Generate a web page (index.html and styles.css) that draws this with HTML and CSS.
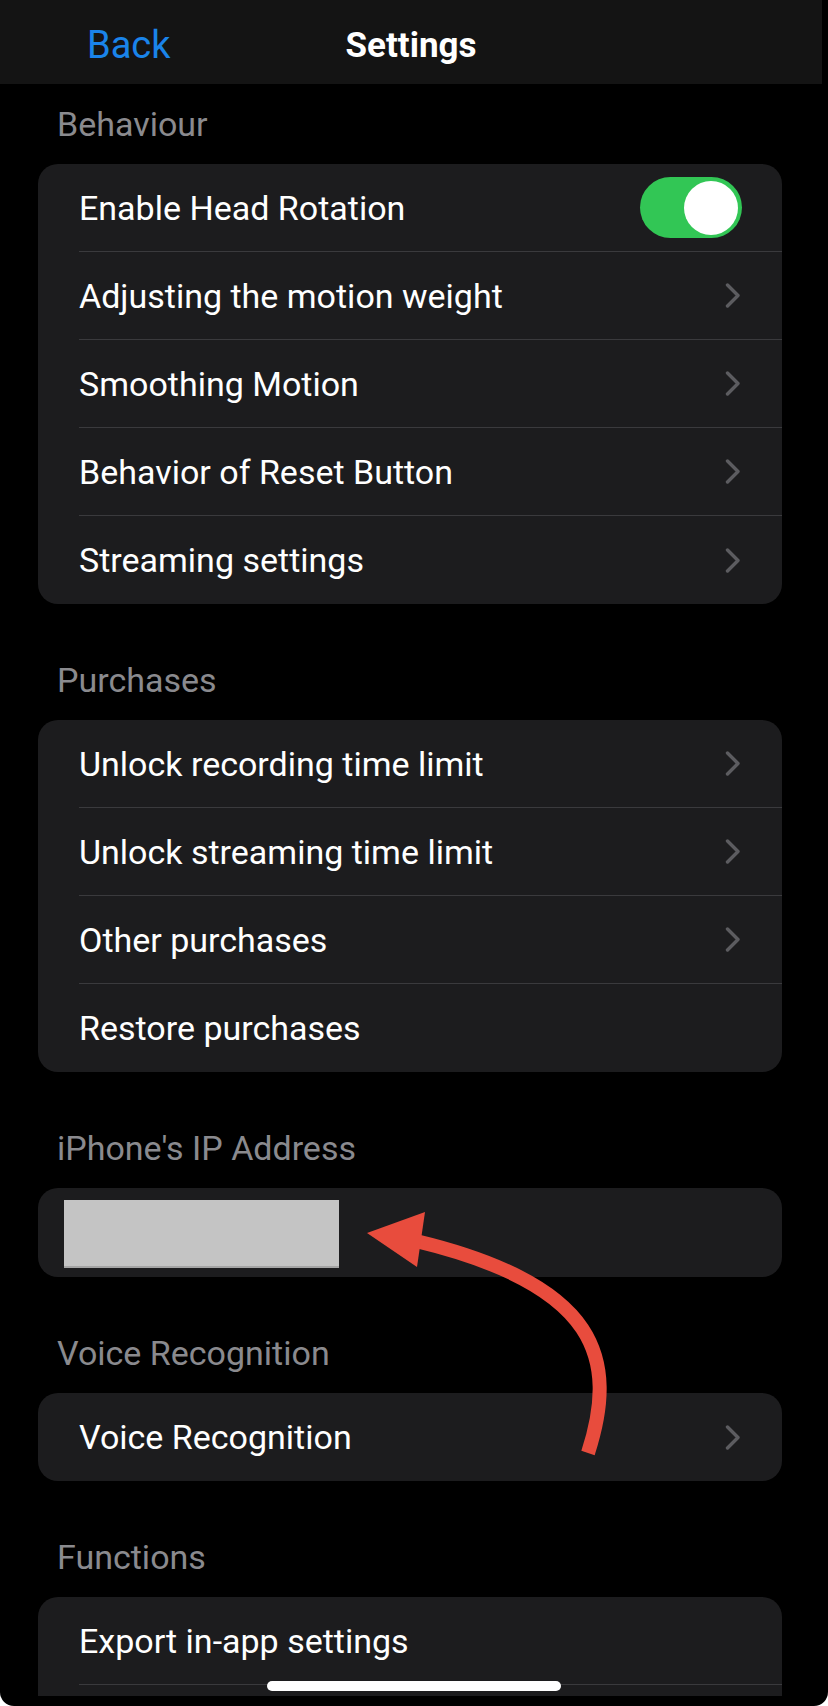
FILE: index.html
```html
<!DOCTYPE html>
<html>
<head>
  <title>Settings</title>
  <link rel="stylesheet" href="styles.css">
</head>
<body>
  <div class="screen">
    <div class="viewport">
      <header class="nav-bar">
        <a class="nav-back">Back</a>
        <h1 class="nav-title">Settings</h1>
        <span></span>
      </header>

      <main class="content">
        <section class="group">
          <h2 class="group-title">Behaviour</h2>
          <ul class="card">
            <li class="row">
              <span>Enable Head Rotation</span>
              <span class="switch"><span class="knob"></span></span>
            </li>
            <li class="row row-link"><span>Adjusting the motion weight</span></li>
            <li class="row row-link"><span>Smoothing Motion</span></li>
            <li class="row row-link"><span>Behavior of Reset Button</span></li>
            <li class="row row-link"><span>Streaming settings</span></li>
          </ul>
        </section>

        <section class="group">
          <h2 class="group-title">Purchases</h2>
          <ul class="card">
            <li class="row row-link"><span>Unlock recording time limit</span></li>
            <li class="row row-link"><span>Unlock streaming time limit</span></li>
            <li class="row row-link"><span>Other purchases</span></li>
            <li class="row"><span>Restore purchases</span></li>
          </ul>
        </section>

        <section class="group">
          <h2 class="group-title">iPhone's IP Address</h2>
          <div class="card card-ip">
            <div class="redacted"></div>
          </div>
        </section>

        <section class="group">
          <h2 class="group-title">Voice Recognition</h2>
          <ul class="card">
            <li class="row row-link"><span>Voice Recognition</span></li>
          </ul>
        </section>

        <section class="group">
          <h2 class="group-title">Functions</h2>
          <ul class="card">
            <li class="row"><span>Export in-app settings</span></li>
            <li class="row"><span></span></li>
          </ul>
        </section>
      </main>
    </div>

    <!-- red arrow drawn over the screenshot -->
    <svg class="annotation" width="828" height="1706" viewBox="0 0 828 1706">
      <path d="M588 1453 C618 1360 600 1285 416 1241" fill="none" stroke="#e84c3d" stroke-width="14"/>
      <polygon points="367,1233 425,1212 417,1267" fill="#e84c3d"/>
    </svg>

    <div class="home-indicator"></div>
  </div>

  <script>
    // chevrons for the rows that open a sub page
    var links = document.querySelectorAll('.row-link');
    for (var i = 0; i < links.length; i++) {
      links[i].insertAdjacentHTML('beforeend',
        '<svg class="chevron" width="16" height="25" viewBox="0 0 16 25">' +
        '<polyline points="2.5,2 13,12.5 2.5,23" fill="none" stroke="#5c5c60" stroke-width="3.4" stroke-linecap="round" stroke-linejoin="round"/></svg>');
    }
  </script>
</body>
</html>
```

FILE: styles.css
```css
html {
  background-color: #ffffff;
}

body {
  margin: 0;
  font-family: Roboto, "Liberation Sans", sans-serif;
  color: #ffffff;
}

.screen {
  position: relative;
  width: 828px;
  height: 1706px;
  background-color: #000000;
  border-radius: 0 0 14px 14px;
  overflow: hidden;
}

.viewport {
  width: 822px;
  height: 1696px;
  overflow: hidden;
}

.nav-bar {
  display: grid;
  grid-template-columns: 1fr auto 1fr;
  align-items: center;
  height: 84px;
  padding-top: 6px;
  box-sizing: border-box;
  background-color: #141414;
}

.nav-back {
  padding-left: 87px;
  font-size: 38px;
  color: #1a84ea;
}

.nav-title {
  margin: 0;
  font-size: 35px;
  font-weight: 700;
  color: #ffffff;
}

.group + .group {
  margin-top: 36px;
}

.group-title {
  display: flex;
  align-items: flex-end;
  height: 80px;
  margin: 0;
  padding: 0 0 20px 57px;
  box-sizing: border-box;
  font-size: 34px;
  font-weight: 400;
  line-height: 40px;
  color: #8a8a8e;
}

.card {
  list-style: none;
  margin: 0 40px 0 38px;
  padding: 0 0 0 41px;
  background-color: #1c1c1e;
  border-radius: 20px;
}

.row {
  display: flex;
  align-items: center;
  justify-content: space-between;
  height: 88px;
  padding-right: 40px;
  box-sizing: border-box;
  border-bottom: 1px solid #3a3a3d;
  font-size: 34px;
}

.row:last-child {
  border-bottom: none;
}

.chevron {
  margin-right: 1px;
}

.switch {
  position: relative;
  display: block;
  width: 102px;
  height: 61px;
  border-radius: 31px;
  background-color: #32c655;
}

.knob {
  position: absolute;
  top: 4px;
  right: 4px;
  width: 54px;
  height: 54px;
  border-radius: 50%;
  background-color: #ffffff;
}

.card-ip {
  padding: 12px 0 9px 26px;
}

.redacted {
  width: 275px;
  height: 68px;
  box-sizing: border-box;
  background-color: #c4c4c4;
  border-bottom: 2px solid #a4a4a4;
}

.annotation {
  position: absolute;
  top: 0;
  left: 0;
  pointer-events: none;
}

.home-indicator {
  position: absolute;
  top: 1681px;
  left: 267px;
  width: 294px;
  height: 10px;
  border-radius: 5px;
  background-color: #ffffff;
}
```
